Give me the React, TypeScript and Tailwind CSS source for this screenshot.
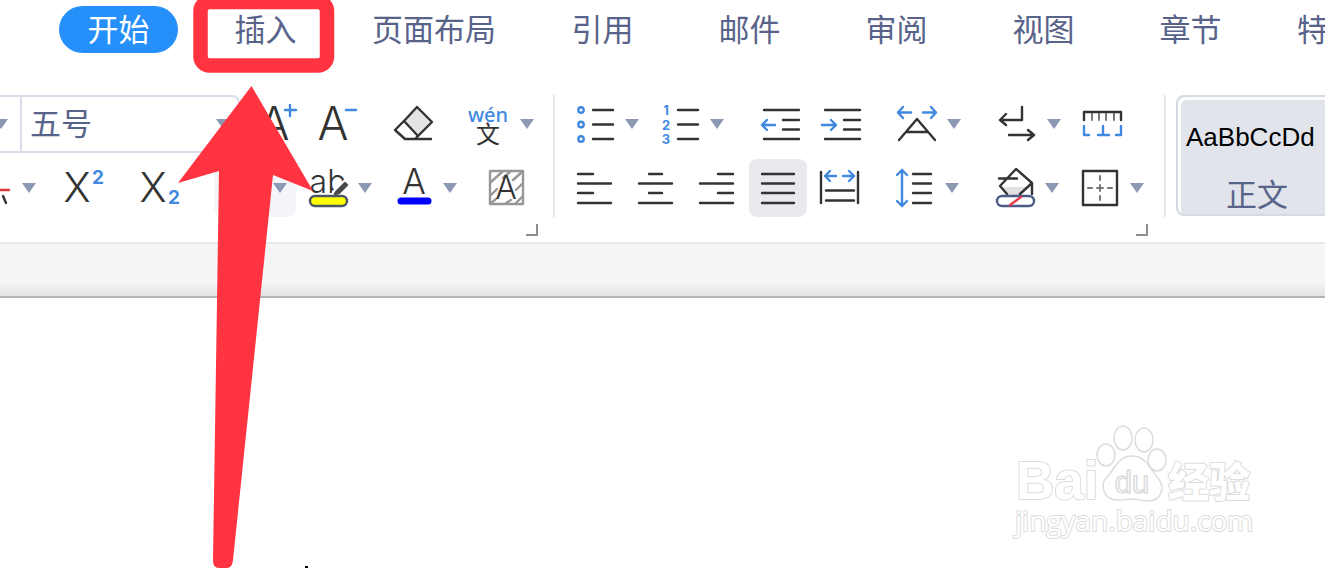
import React from 'react';

const tabs = ['插入', '页面布局', '引用', '邮件', '审阅', '视图', '章节', '特色功能'];

const BLUE = '#4189df';

function Icon({ children }: { children: React.ReactNode }) {
  return (
    <svg
      viewBox="0 0 40 40"
      className="block h-10 w-10 overflow-visible"
      fill="none"
      stroke="#333"
      strokeWidth="2.4"
      strokeLinecap="round"
      strokeLinejoin="round"
      aria-hidden="true"
    >
      {children}
    </svg>
  );
}

function Caret() {
  return (
    <svg viewBox="0 0 14 10" className="block h-[10px] w-[14px]" aria-hidden="true">
      <path d="M0 0h14L7 10z" fill="#8c98b4" />
    </svg>
  );
}

function Tool({ label, split, active, children }: {
  label: string;
  split?: boolean;
  active?: 'strong' | 'soft';
  children?: React.ReactNode;
}) {
  return (
    <button
      type="button"
      aria-label={label}
      className={
        'flex shrink-0 items-center gap-[10px] ' +
        (active === 'strong' ? '-m-[9px] rounded-lg bg-[#e8eaed] p-[9px]' : '') +
        (active === 'soft' ? '-m-[9px] rounded-lg bg-[#f4f5f8] p-[9px]' : '')
      }
    >
      <Icon>{children}</Icon>
      {split && <Caret />}
    </button>
  );
}

function Letter({ x, y, size, children }: { x: number; y: number; size: number; children: string }) {
  return (
    <text
      x={x}
      y={y}
      fontSize={size}
      textAnchor="middle"
      fill="#333"
      stroke="none"
      className="font-[Inter,sans-serif] font-light"
    >
      {children}
    </text>
  );
}

function Digit({ x, y, size, children }: { x: number; y: number; size: number; children: string }) {
  return (
    <text
      x={x}
      y={y}
      fontSize={size}
      textAnchor="middle"
      fill={BLUE}
      stroke="none"
      className="font-[Inter,sans-serif] font-bold"
    >
      {children}
    </text>
  );
}

function Launcher({ label }: { label: string }) {
  return (
    <button type="button" aria-label={label} className="-mr-1 mt-[7px] self-end">
      <svg viewBox="0 0 12 12" className="block h-3 w-3" aria-hidden="true">
        <path d="M11 0v11H0" fill="none" stroke="#8e8e8e" strokeWidth="2" />
      </svg>
    </button>
  );
}

function FontGroup() {
  return (
    <section aria-label="字体" className="-ml-7 flex shrink-0 flex-col pr-[19px]">
      <div className="flex h-[58px] items-center">
        <button
          type="button"
          aria-label="字体名称"
          className="flex h-[58px] w-12 items-center justify-end border-y-2 border-[#d9dcea] pr-3"
        >
          <Caret />
        </button>
        <div className="relative mr-[17px] w-[220px]">
          <select
            aria-label="字号"
            className="h-[58px] w-full appearance-none rounded-r-lg border-2 border-[#d9dcea] bg-white pb-1 pl-2 text-[31px] text-[#58638a]"
          >
            <option>五号</option>
          </select>
          <span className="pointer-events-none absolute right-[10px] top-6">
            <Caret />
          </span>
        </div>
        <div className="flex gap-9">
          <div className="flex gap-[21px]">
            <Tool label="增大字号">
              <Letter x={17} y={36} size={46}>A</Letter>
              <path d="M28 6h11M33 1v11" stroke={BLUE} />
            </Tool>
            <Tool label="减小字号">
              <Letter x={15} y={36} size={46}>A</Letter>
              <path d="M28 6h10" stroke={BLUE} />
            </Tool>
          </div>
          <Tool label="清除格式">
            <path d="M10 17 23 3l15 15-14 14z" fill="#e4e4e4" />
            <path d="M10 17 1 26l10 9h26M24 32l-3 3" />
          </Tool>
          <Tool label="拼音指南" split>
            <text
              x="18"
              y="18"
              fontSize="20"
              textAnchor="middle"
              fill={BLUE}
              stroke="none"
              className="font-[Noto_Sans,sans-serif] font-medium"
            >
              wén
            </text>
            <text x="18" y="39" fontSize="24" textAnchor="middle" fill="#333" stroke="none">文</text>
          </Tool>
        </div>
      </div>

      <div className="mt-[6px] flex h-[58px] items-center">
        <div className="mr-11 flex gap-[27px]">
          <Tool label="删除线" split>
            <path d="M14 22h23" stroke="#d93a3a" />
            <path d="m31 28 3 7" />
          </Tool>
          <div className="flex gap-9">
            <Tool label="上标">
              <Letter x={14} y={34} size={41}>X</Letter>
              <Digit x={35} y={16} size={19}>2</Digit>
            </Tool>
            <Tool label="下标">
              <Letter x={14} y={34} size={41}>X</Letter>
              <Digit x={35} y={36} size={19}>2</Digit>
            </Tool>
          </div>
        </div>
        <div className="mr-[29px] flex gap-[21px]">
          <Tool label="文字效果" split active="soft" />
          <Tool label="突出显示" split>
            <Letter x={20} y={25} size={32}>ab</Letter>
            <path d="M38 15 28 25" stroke="#fff" strokeWidth="8" />
            <path d="M37 15 29 23l-2 3 4-1 8-8z" fill="#4a4a4a" stroke="#4a4a4a" />
            <rect x="2" y="28" width="37" height="10" rx="5" fill="#ffff00" stroke="#4a5666" />
          </Tool>
          <Tool label="字体颜色" split>
            <Letter x={21} y={26} size={35}>A</Letter>
            <path d="M8 33h27" stroke="#0000ff" strokeWidth="7" />
          </Tool>
        </div>
        <Tool label="字符底纹">
          <g stroke="#989898">
            <rect x="4" y="3" width="33" height="33" />
            <path d="m5 14 11-10M5 27l6-6M17 10l8-7M27 12l9-8M30 22l6-6M5 35l5-4M20 35l5-3M30 35l6-6" />
          </g>
          <Letter x={20} y={31} size={32}>A</Letter>
        </Tool>
      </div>
      <Launcher label="字体设置" />
    </section>
  );
}

function ParagraphGroup() {
  return (
    <section aria-label="段落" className="flex shrink-0 flex-col px-5">
      <div className="flex h-[58px] items-center gap-9">
        <div className="flex gap-[21px]">
          <Tool label="项目符号" split>
            <g stroke={BLUE}>
              <circle cx="6" cy="6" r="2.700" />
              <circle cx="6" cy="20.500" r="2.700" />
              <circle cx="6" cy="35" r="2.700" />
            </g>
            <path d="M18 6h20M18 20.500h20M18 35h20" />
          </Tool>
          <Tool label="编号" split>
            <Digit x={6} y={11} size={13}>1</Digit>
            <Digit x={6} y={26} size={13}>2</Digit>
            <Digit x={6} y={40} size={13}>3</Digit>
            <path d="M18 6h20M18 20.500h20M18 35h20" />
          </Tool>
        </div>
        <div className="flex gap-[21px]">
          <Tool label="减少缩进量">
            <path d="M4 6h35M23 16h16M23 25.500h16M4 35h35" />
            <path d="M15 21H2M7 16l-5 5 5 5" stroke={BLUE} />
          </Tool>
          <Tool label="增加缩进量">
            <path d="M4 6h35M23 16h16M23 25.500h16M4 35h35" />
            <path d="M1 21h14M10 16l5 5-5 5" stroke={BLUE} />
          </Tool>
        </div>
        <Tool label="中文版式" split>
          <path d="M14 8.500H1M6 3 1 8.500 6 14M26 8.500h13M34 3l5 5.500-5 5.500" stroke={BLUE} />
          <path d="m2 36 18-21 18 21M9 28h22" />
        </Tool>
        <div className="flex gap-[21px]">
          <Tool label="显示段落标记" split>
            <path d="M25 3v13H4M9 10l-6 6 6 5M12 31h24M31 26l6 5-6 5" />
          </Tool>
          <Tool label="制表位">
            <path d="M10 9v7M17 9v7M24 9v7M32 9v7" stroke="#7a7a7a" strokeWidth="2" />
            <path d="M2 16V8h37v8" />
            <path d="M2 22v9h5M21 22v9M16 31h11M39 22v9h-5" stroke={BLUE} />
          </Tool>
        </div>
      </div>

      <div className="mt-[6px] flex h-[58px] items-center gap-9">
        <div className="flex gap-[21px]">
          <Tool label="左对齐">
            <path d="M3 6h15M3 15.500h33M3 25h15M3 35h33" />
          </Tool>
          <Tool label="居中对齐">
            <path d="M13 6h13M3 15.500h33M13 25h13M3 35h33" />
          </Tool>
          <Tool label="右对齐">
            <path d="M21 6h15M3 15.500h33M21 25h15M3 35h33" />
          </Tool>
          <Tool label="两端对齐" active="strong">
            <path d="M4 6h32M4 15.500h32M4 25h32M4 35h32" />
          </Tool>
          <Tool label="分散对齐">
            <path d="M2 4v31M39 4v31M7 22.500h28M7 32.500h28" />
            <path d="M17 8H6M11 3 6 8l5 5M24 8h11M30 3l5 5-5 5" stroke={BLUE} />
          </Tool>
        </div>
        <Tool label="行距" split>
          <path d="M7 2v36M2 7l5-5 5 5M2 33l5 5 5-5" stroke={BLUE} />
          <path d="M18 6h18M18 15.500h18M18 25h18M18 35h18" />
        </Tool>
        <div className="flex gap-[21px]">
          <Tool label="底纹颜色" split>
            <path d="M6 19h27l-8 8H12z" fill="#e2e2e2" stroke="none" />
            <path d="M12 26 5 18 21 1l16 14v11M37 15 25 26M4 10.500h18" />
            <rect x="2" y="28" width="37" height="10" rx="5" fill="#fff" stroke="#4b5b85" />
            <path d="m15 37 11-8" stroke="#e8384d" />
          </Tool>
          <Tool label="边框" split>
            <rect x="3" y="3" width="34" height="34" />
            <path d="M20 8v4M20 17v6M20 28v4M8 20h4M17 20h6M28 20h4" stroke="#777" strokeWidth="2" />
          </Tool>
        </div>
      </div>
      <Launcher label="段落设置" />
    </section>
  );
}

function Separator() {
  return <div className="h-[122px] w-[2px] shrink-0 bg-[#e4e6e9]" />;
}

function Watermark() {
  return (
    <svg
      viewBox="0 0 240 116"
      className="absolute bottom-7 right-[70px] h-[116px] w-[240px] overflow-visible"
      fill="#fff"
      stroke="#dcdcdc"
      strokeWidth="2"
      strokeLinejoin="round"
    >
      <g style={{ paintOrder: 'stroke' }}>
        <text x="1" y="75" fontSize="53" className="font-[Liberation_Sans,sans-serif] font-bold">Bai</text>
        <text x="153" y="73" fontSize="41" className="font-black">经验</text>
        <text x="0" y="107" fontSize="28" className="font-[Open_Sans,sans-serif]">jingyan.baidu.com</text>
      </g>
      <ellipse cx="91" cy="31" rx="9" ry="11" strokeWidth="1.500" />
      <ellipse cx="108" cy="14" rx="9" ry="12" strokeWidth="1.500" />
      <ellipse cx="129" cy="16" rx="9" ry="12" strokeWidth="1.500" />
      <ellipse cx="142" cy="36" rx="9" ry="11" strokeWidth="1.500" />
      <path
        d="M117 32c-14 0-16 12-25 21-8 8-3 23 10 23 8 0 9-1 15-1s8 2 16 2c13 0 18-13 10-23-8-9-12-22-26-22z"
        strokeWidth="1.500"
      />
      <text x="117" y="69" fontSize="31" textAnchor="middle" strokeWidth="1.500" className="font-[Liberation_Sans,sans-serif]">du</text>
    </svg>
  );
}

// Red frame and arrow pointing at the insert tab
function Annotation() {
  return (
    <svg
      viewBox="0 0 340 568"
      className="pointer-events-none absolute left-0 top-0 h-[568px] w-[340px]"
      aria-hidden="true"
    >
      <rect x="200.500" y="2" width="126.500" height="63.500" rx="9" fill="none" stroke="#ff3440" strokeWidth="14.500" />
      <path
        d="M251.500 86 313 191 273 175 233 560q-1 8-6 8h-8q-6 0-6-8L219 171 178 183z"
        fill="#ff3440"
      />
    </svg>
  );
}

export default function App() {
  return (
    <div className="relative flex min-h-screen flex-col overflow-hidden bg-white font-['Noto_Sans_CJK_SC',sans-serif]">
      <nav className="flex gap-7 pb-[42px] pl-[59px] pt-[6px] text-[31px] text-[#58638a]">
        <button type="button" className="h-[47px] min-w-[119px] rounded-full bg-[#258ffa] pb-[3px] leading-[44px] text-white">
          开始
        </button>
        {tabs.map((tab) => (
          <button
            key={tab}
            type="button"
            className="h-[47px] min-w-[119px] shrink-0 whitespace-nowrap px-[19px] pb-[3px] leading-[44px]"
          >
            {tab}
          </button>
        ))}
      </nav>

      <div className="flex items-start border-b-2 border-[#e6e9ea] pb-[6px]">
        <FontGroup />
        <Separator />
        <ParagraphGroup />
        <Separator />
        <button
          type="button"
          className="ml-[10px] flex h-[121px] w-[162px] shrink-0 flex-col justify-between rounded-lg border-2 border-[#d5d9e0] bg-[#e1e5eb] pb-[3px] pt-[22px] shadow-[inset_3px_3px_0_#fff]"
        >
          <span className="self-start pl-2 font-['Liberation_Sans',sans-serif] text-[26px] leading-9 text-black">AaBbCcDd</span>
          <span className="self-center text-[31px] leading-9 text-[#58638a]">正文</span>
        </button>
      </div>

      <div className="h-[54px] border-b-2 border-[#b3b6b9] bg-linear-to-b from-[#f4f5f7] from-75% to-[#e0e2e4]" />

      <main className="relative flex flex-1 flex-col justify-end pl-[305px]">
        <div className="h-[2px] w-[3px] bg-black" />
        <Watermark />
      </main>

      <Annotation />
    </div>
  );
}
